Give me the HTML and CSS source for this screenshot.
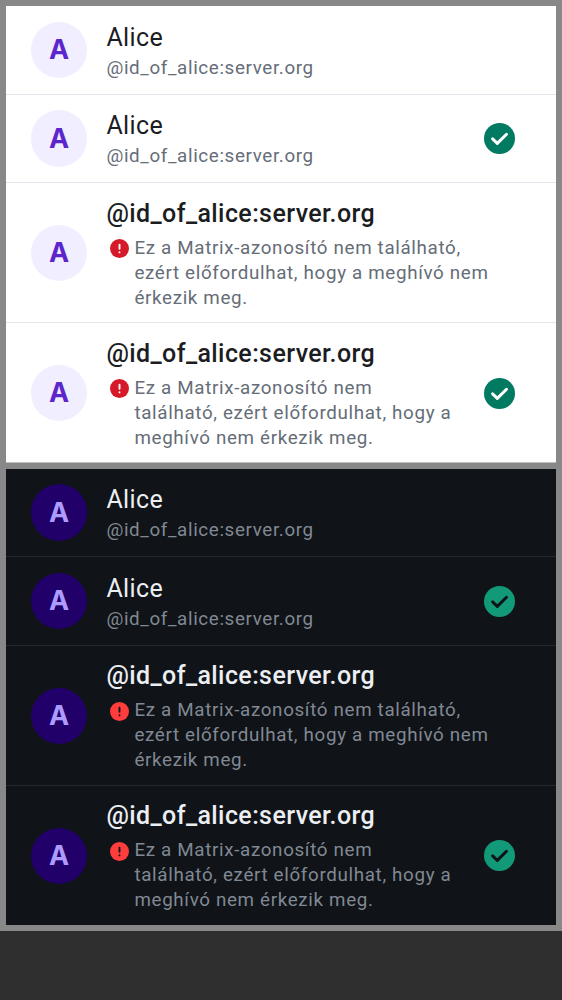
FILE: index.html
```
<!DOCTYPE html>
<html lang="hu">
<head>
<meta charset="utf-8">
<title>Alice</title>
<link rel="stylesheet" href="styles.css">
</head>
<body>
<svg class="defs" width="0" height="0">
  <symbol id="check" viewBox="0 0 31 31">
    <circle class="disc" cx="15.5" cy="15.5" r="15.5"/>
    <path class="mark" d="M8.6 15.9 L13.3 20.4 L22.5 11.3"/>
  </symbol>
  <symbol id="error" viewBox="0 0 18 18">
    <circle class="disc" cx="9" cy="9" r="9"/>
    <path class="mark" d="M9 5.3 V9.3 M9 12.6 V12.7"/>
  </symbol>
</svg>
<main class="frame">
  <section class="panel light">
    <div class="row tall-divider">
      <div class="avatar">A</div>
      <div class="text"><div class="name">Alice</div><div class="sub">@id_of_alice:server.org</div></div>
    </div>
    <div class="row">
      <div class="avatar">A</div>
      <div class="text"><div class="name">Alice</div><div class="sub">@id_of_alice:server.org</div></div>
      <svg class="check"><use href="#check"/></svg>
    </div>
    <div class="row unresolved">
      <div class="avatar">A</div>
      <div class="text"><div class="name">@id_of_alice:server.org</div>
        <div class="warning"><svg class="error"><use href="#error"/></svg><div class="sub">Ez a Matrix-azonosító nem található,<br>ezért előfordulhat, hogy a meghívó nem<br>érkezik meg.</div></div></div>
    </div>
    <div class="row unresolved">
      <div class="avatar">A</div>
      <div class="text"><div class="name">@id_of_alice:server.org</div>
        <div class="warning"><svg class="error"><use href="#error"/></svg><div class="sub">Ez a Matrix-azonosító nem<br>található, ezért előfordulhat, hogy a<br>meghívó nem érkezik meg.</div></div></div>
      <svg class="check"><use href="#check"/></svg>
    </div>
  </section>
  <section class="panel dark">
    <div class="row">
      <div class="avatar">A</div>
      <div class="text"><div class="name">Alice</div><div class="sub">@id_of_alice:server.org</div></div>
    </div>
    <div class="row tall-divider">
      <div class="avatar">A</div>
      <div class="text"><div class="name">Alice</div><div class="sub">@id_of_alice:server.org</div></div>
      <svg class="check"><use href="#check"/></svg>
    </div>
    <div class="row unresolved">
      <div class="avatar">A</div>
      <div class="text"><div class="name">@id_of_alice:server.org</div>
        <div class="warning"><svg class="error"><use href="#error"/></svg><div class="sub">Ez a Matrix-azonosító nem található,<br>ezért előfordulhat, hogy a meghívó nem<br>érkezik meg.</div></div></div>
    </div>
    <div class="row unresolved">
      <div class="avatar">A</div>
      <div class="text"><div class="name">@id_of_alice:server.org</div>
        <div class="warning"><svg class="error"><use href="#error"/></svg><div class="sub">Ez a Matrix-azonosító nem<br>található, ezért előfordulhat, hogy a<br>meghívó nem érkezik meg.</div></div></div>
      <svg class="check"><use href="#check"/></svg>
    </div>
  </section>
</main>
</body>
</html>
```
FILE: styles.css
```
* { box-sizing: border-box; }
body { margin: 0; background: #2f2f2f; font-family: Roboto, sans-serif; }
.defs { display: block; height: 0; }
.frame { height: 931px; padding: 6px; background: #888888; display: flex; flex-direction: column; gap: 6px; }
.panel { background: var(--bg); color: var(--fg); }
.light { --bg: #ffffff; --fg: #1b1d22; --sub: #656d77; --line: #e1e6ec; --avatar: #f1eeff; --letter: #5d26cd; --accent: #007a61; --error: #d51928; }
.dark { --bg: #101317; --fg: #ebeef2; --sub: #808994; --line: #26282d; --avatar: #22006a; --letter: #ad9cfe; --accent: #129a78; --error: #ff3d3d; height: 456px; }
.row { height: 88px; display: flex; align-items: center; padding: 0 41px 0 25px; border-bottom: 1px solid var(--line); }
.row.tall-divider { height: 89px; }
.row.unresolved { height: 140px; }
.light .row:last-child { border-color: #c0c0c0; }
.dark .row:last-child { height: 139px; border: 0; }
.avatar { flex: none; width: 56.4px; height: 56.4px; border-radius: 50%; background: var(--avatar); color: var(--letter); display: grid; place-items: center; font: 700 27px/32px Inter, sans-serif; }
.unresolved .avatar, .unresolved .check { margin-top: 1px; }
.dark .row:last-child .check { margin-top: 0; }
.row:not(.unresolved) .avatar { padding-top: 1px; }
.text { flex: 1; margin-left: 19px; white-space: nowrap; }
.name { font-size: 25px; line-height: 36px; letter-spacing: 0.4px; }
.sub { font-size: 18.8px; line-height: 25px; letter-spacing: 0.64px; color: var(--sub); }
.unresolved .name { font-weight: 500; margin-bottom: 4px; }
.light .unresolved .text { padding-top: 1px; }
.warning { display: flex; align-items: flex-start; padding-left: 4px; gap: 5px; }
.warning .sub { letter-spacing: 0.66px; }
.check { flex: none; width: 31px; height: 31px; }
.disc { fill: var(--accent); }
.mark { fill: none; stroke: var(--bg); stroke-width: var(--mark-width, 3); stroke-linecap: round; stroke-linejoin: round; }
.error { --accent: var(--error); --mark-width: 1.8; flex: none; width: 19px; height: 19px; margin-top: 3.5px; }
```
